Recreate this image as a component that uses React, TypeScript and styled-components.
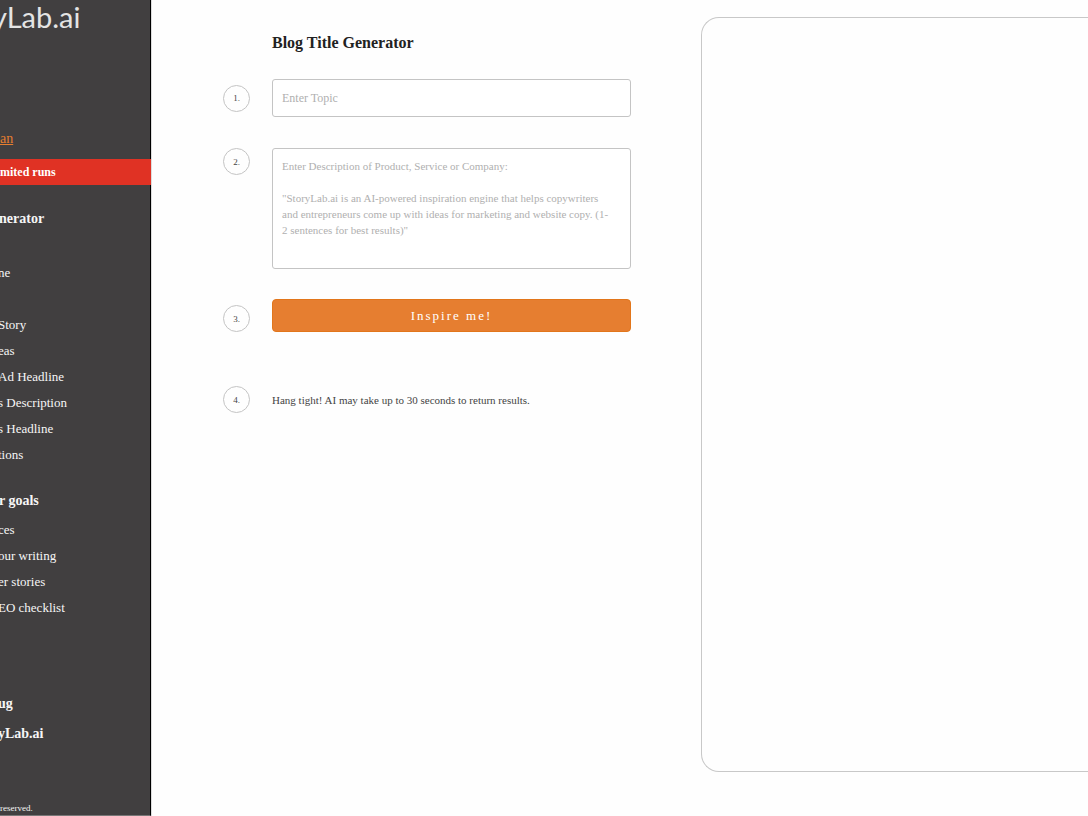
import React from "react";
import styled, { createGlobalStyle } from "styled-components";

const GlobalStyle = createGlobalStyle`
  *, *::before, *::after { box-sizing: border-box; }
  body {
    margin: 0;
    background: #fefefe;
    color: #222;
    font-family: "Liberation Serif", "Times New Roman", serif;
  }
`;

const Page = styled.div`
  display: flex;
  min-height: 100vh;
`;

const Sidebar = styled.aside`
  flex: 0 0 151px;
  display: flex;
  flex-direction: column;
  white-space: nowrap;
  background: #413f40;
  border-right: 1px solid #000;
  border-bottom: 1px solid #777;
  color: #f6f6f6;
`;

const Logo = styled.a`
  margin: 0 0 92px -8px;
  font-family: Lato, sans-serif;
  font-size: 29px;
  line-height: 34px;
  color: #e4e4e4;
  text-decoration: none;
`;

const PlanLink = styled.a`
  font-size: 14px;
  line-height: 26px;
  color: #e67e30;
  text-decoration: underline;
`;

const RunsBanner = styled.p`
  margin: 7px -1px 21px 0;
  background: #e03224;
  color: #fff;
  font-size: 12px;
  font-weight: 700;
  line-height: 26px;
`;

const NavHeading = styled.h2`
  margin: 0 0 0 -1px;
  font-size: 14px;
  font-weight: 700;
  line-height: 26px;
`;

const NavList = styled.ul<{ $top: number; $bottom: number }>`
  list-style: none;
  margin: ${(p) => p.$top}px 0 ${(p) => p.$bottom}px -2px;
  padding: 0;
`;

const NavItem = styled.li<{ $spaced?: boolean }>`
  height: 26px;
  margin-bottom: ${(p) => (p.$spaced ? 26 : 0)}px;
`;

const NavLink = styled.a`
  color: inherit;
  font-size: 13px;
  line-height: 26px;
  text-decoration: none;
`;

const FooterLink = styled.a`
  margin-left: -2px;
  color: inherit;
  font-size: 14px;
  font-weight: 700;
  line-height: 30px;
  text-decoration: none;
`;

const Copyright = styled.small`
  margin-top: auto;
  font-size: 9px;
  line-height: 14px;
`;

const Main = styled.main`
  flex: 1;
  min-width: 0;
  display: grid;
  grid-template-columns: minmax(0, 408fr) minmax(0, 387fr);
  column-gap: 70px;
  padding: 17px 0 44px 71px;
  border-left: 1px solid #ddd;
`;

const Form = styled.form`
  padding-top: 14px;
`;

const Title = styled.h1`
  margin: 0 0 24px 49px;
  font-size: 16px;
  font-weight: 700;
  line-height: 24px;
`;

const Step = styled.div<{ $align: string; $gap: number }>`
  display: grid;
  grid-template-columns: 27px minmax(0, 1fr);
  column-gap: 22px;
  align-items: ${(p) => p.$align};
  margin-bottom: ${(p) => p.$gap}px;
`;

const Badge = styled.span`
  display: flex;
  align-items: center;
  justify-content: center;
  height: 27px;
  border: 1px solid #c4c4c4;
  border-radius: 50%;
  font-size: 9px;
  color: #444;
`;

const TopicInput = styled.input`
  width: 100%;
  height: 38px;
  padding: 0 9px;
  border: 1px solid #c4c4c4;
  border-radius: 3px;
  background: #fff;
  font-family: inherit;
  font-size: 12px;
  &::placeholder { color: #b0b0b0; opacity: 1; }
`;

const DescriptionInput = styled.textarea`
  display: block;
  width: 100%;
  height: 121px;
  padding: 9px 7px 9px 9px;
  border: 1px solid #c4c4c4;
  border-radius: 3px;
  background: #fff;
  font-family: inherit;
  font-size: 11px;
  line-height: 16px;
  resize: none;
  &::placeholder { color: #b0b0b0; opacity: 1; }
`;

const InspireButton = styled.button`
  height: 33px;
  padding: 0;
  border: 1px solid #e2761b;
  border-radius: 4px;
  background: #e67e30;
  color: #fff;
  font-family: inherit;
  font-size: 13px;
  letter-spacing: 2px;
  cursor: pointer;
`;

const Status = styled.p`
  margin: 0;
  font-size: 11px;
  line-height: 16px;
  color: #444;
`;

const Results = styled.section`
  border: 1px solid #c8c8c8;
  border-right: 0;
  border-radius: 18px 0 0 18px;
`;

const tools = [
  { label: "ne", spaced: true },
  { label: "Story" },
  { label: "eas" },
  { label: "Ad Headline" },
  { label: "s Description" },
  { label: "s Headline" },
  { label: "tions" },
];

const goals = ["ces", "our writing", "er stories", "EO checklist"];

const descriptionHint = `Enter Description of Product, Service or Company:

"StoryLab.ai is an AI-powered inspiration engine that helps copywriters
and entrepreneurs come up with ideas for marketing and website copy. (1-
2 sentences for best results)"`;

export default function App() {
  return (
    <>
      <GlobalStyle />
      <Page>
        <Sidebar>
          <Logo href="#home">yLab.ai</Logo>
          <PlanLink href="#plan">an</PlanLink>
          <RunsBanner>mited runs</RunsBanner>
          <NavHeading>nerator</NavHeading>
          <NavList $top={28} $bottom={20}>
            {tools.map((tool) => (
              <NavItem key={tool.label} $spaced={tool.spaced}>
                <NavLink href="#tool">{tool.label}</NavLink>
              </NavItem>
            ))}
          </NavList>
          <NavHeading>r goals</NavHeading>
          <NavList $top={3} $bottom={68}>
            {goals.map((label) => (
              <NavItem key={label}>
                <NavLink href="#goal">{label}</NavLink>
              </NavItem>
            ))}
          </NavList>
          <FooterLink href="#bug">ug</FooterLink>
          <FooterLink href="#about">yLab.ai</FooterLink>
          <Copyright>reserved.</Copyright>
        </Sidebar>
        <Main>
          <Form onSubmit={(e) => e.preventDefault()}>
            <Title>Blog Title Generator</Title>
            <Step $align="center" $gap={31}>
              <Badge>1.</Badge>
              <TopicInput aria-label="Topic" placeholder="Enter Topic" />
            </Step>
            <Step $align="start" $gap={30}>
              <Badge>2.</Badge>
              <DescriptionInput aria-label="Description" placeholder={descriptionHint} />
            </Step>
            <Step $align="end" $gap={54}>
              <Badge>3.</Badge>
              <InspireButton type="submit">Inspire me!</InspireButton>
            </Step>
            <Step $align="center" $gap={0}>
              <Badge>4.</Badge>
              <Status>Hang tight! AI may take up to 30 seconds to return results.</Status>
            </Step>
          </Form>
          <Results aria-label="Results" />
        </Main>
      </Page>
    </>
  );
}
